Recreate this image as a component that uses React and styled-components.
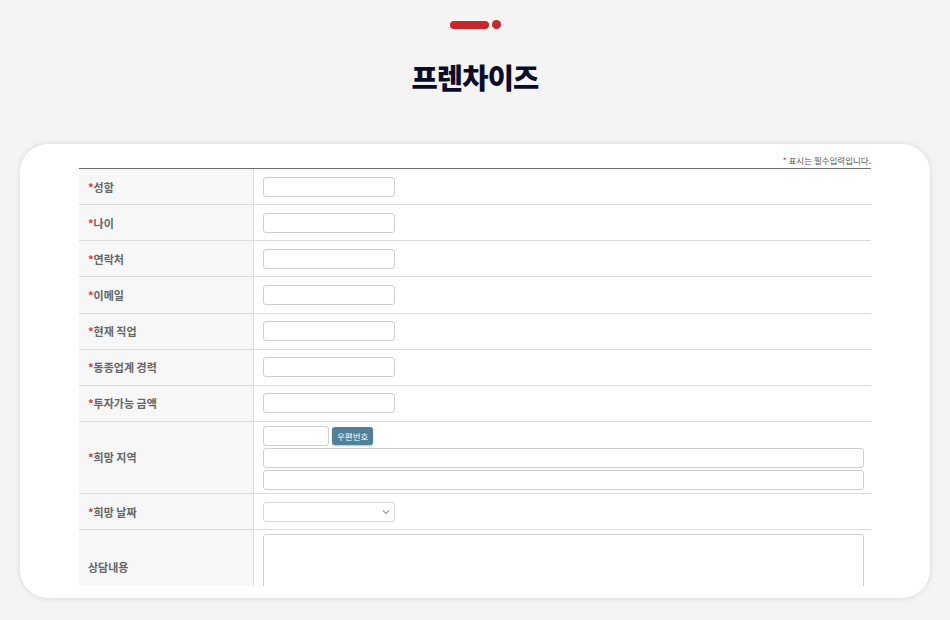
import React from "react";
import styled, { createGlobalStyle } from "styled-components";

const GlobalStyle = createGlobalStyle`
  html, body {
    margin: 0;
    padding: 0;
    background: #f4f4f4;
    font-family: "Noto Sans CJK KR", "Noto Sans", sans-serif;
  }
  * { box-sizing: border-box; }
`;

const fields = [
  { label: "성함", required: true },
  { label: "나이", required: true },
  { label: "연락처", required: true },
  { label: "이메일", required: true },
  { label: "현재 직업", required: true },
  { label: "동종업계 경력", required: true },
  { label: "투자가능 금액", required: true },
];

function Chevron() {
  return (
    <svg width="10" height="10" viewBox="0 0 10 10">
      <path d="M2 3.5 L5 6.5 L8 3.5" fill="none" stroke="#999" strokeWidth="1.1" />
    </svg>
  );
}

export default function App() {
  return (
    <Page>
      <GlobalStyle />
      <Header>
        <Deco>
          <Pill />
          <Dot />
        </Deco>
        <Title>프렌차이즈</Title>
      </Header>
      <Card>
        <Note>
          <Star>*</Star> 표시는 필수입력입니다.
        </Note>
        <Clip>
          <Table>
            {fields.map((f) => (
              <Row key={f.label}>
                <Label>
                  {f.required && <Star>*</Star>}
                  {f.label}
                </Label>
                <Cell>
                  <Input />
                </Cell>
              </Row>
            ))}
            <Row>
              <Label>
                <Star>*</Star>희망 지역
              </Label>
              <Cell $stack>
                <Inline>
                  <Input $w="66px" />
                  <ZipButton>우편번호</ZipButton>
                </Inline>
                <Input $w="100%" />
                <Input $w="100%" />
              </Cell>
            </Row>
            <Row>
              <Label>
                <Star>*</Star>희망 날짜
              </Label>
              <Cell>
                <Select>
                  <Chevron />
                </Select>
              </Cell>
            </Row>
            <Row>
              <Label>상담내용</Label>
              <Cell $stack>
                <TextArea />
              </Cell>
            </Row>
          </Table>
        </Clip>
      </Card>
    </Page>
  );
}

const Page = styled.div`
  width: 950px;
  height: 620px;
  overflow: hidden;
  padding: 20px 20px 0;
`;

const Header = styled.div`
  display: flex;
  flex-direction: column;
  align-items: center;
`;

const Deco = styled.div`
  display: flex;
  align-items: center;
  gap: 3px;
  height: 9px;
`;

const Pill = styled.div`
  width: 39px;
  height: 8px;
  border-radius: 4px;
  background: #c8282c;
`;

const Dot = styled.div`
  width: 9px;
  height: 9px;
  border-radius: 50%;
  background: #c8282c;
`;

const Title = styled.h1`
  margin: 28px 0 0;
  font-size: 28.5px;
  line-height: 40px;
  font-weight: 800;
  color: #0c0c2a;
  letter-spacing: -0.8px;
`;

const Card = styled.div`
  margin-top: 47px;
  height: 454px;
  background: #fff;
  border-radius: 28px;
  box-shadow: 0 0 6px rgba(0, 0, 0, 0.12);
  padding: 9px 59px 12px;
  display: flex;
  flex-direction: column;
`;

const Note = styled.div`
  text-align: right;
  font-size: 8.5px;
  line-height: 15px;
  color: #555;
`;

const Star = styled.span`
  color: #e2333a;
`;

const Clip = styled.div`
  flex: 1;
  overflow: hidden;
`;

const Table = styled.div`
  border-top: 1px solid #6e6e6e;
`;

const Row = styled.div`
  display: grid;
  grid-template-columns: 175px 1fr;
  border-bottom: 1px solid #dcdcdc;
  min-height: 36.15px;
`;

const Label = styled.div`
  display: flex;
  align-items: center;
  padding-left: 9px;
  background: #f7f7f7;
  border-right: 1px solid #dcdcdc;
  font-size: 11px;
  font-weight: 700;
  color: #666;
`;

const Cell = styled.div`
  display: flex;
  flex-direction: ${(p) => (p.$stack ? "column" : "row")};
  align-items: ${(p) => (p.$stack ? "stretch" : "center")};
  gap: 2px;
  padding: ${(p) => (p.$stack ? "4px 7px 3px 9px" : "0 9px")};
`;

const Inline = styled.div`
  display: flex;
  align-items: center;
  gap: 3px;
`;

const Input = styled.div`
  width: ${(p) => p.$w || "132px"};
  height: 20px;
  border: 1px solid #cfcfcf;
  border-radius: 3px;
  background: #fff;
`;

const ZipButton = styled.div`
  height: 18px;
  padding: 0 5px;
  display: flex;
  align-items: center;
  border-radius: 3px;
  background: #52809a;
  color: #fff;
  font-size: 8.5px;
  box-shadow: 0 1px 2px rgba(0, 0, 0, 0.25);
`;

const Select = styled.div`
  width: 132px;
  height: 20px;
  border: 1px solid #d6d6d6;
  border-radius: 3px;
  display: flex;
  align-items: center;
  justify-content: flex-end;
  padding-right: 3px;
`;

const TextArea = styled.div`
  height: 66px;
  border: 1px solid #cfcfcf;
  border-radius: 3px;
`;
